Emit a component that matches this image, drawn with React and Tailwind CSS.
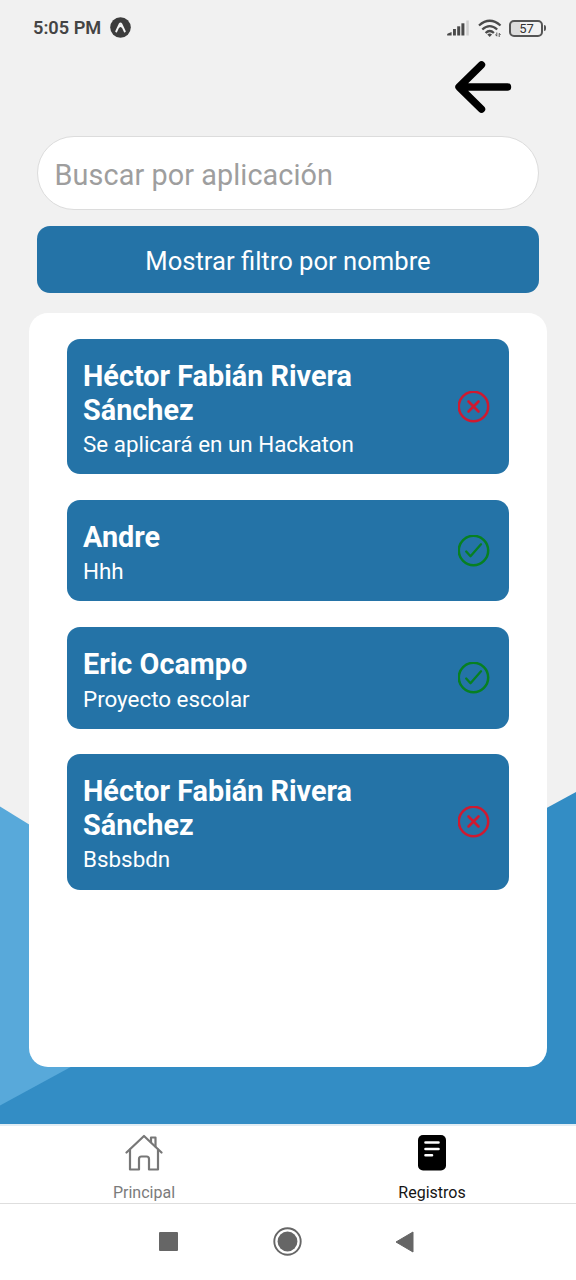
import React from "react";

const records = [
  { name: "Héctor Fabián Rivera Sánchez", detail: "Se aplicará en un Hackaton", ok: false },
  { name: "Andre", detail: "Hhh", ok: true },
  { name: "Eric Ocampo", detail: "Proyecto escolar", ok: true },
  { name: "Héctor Fabián Rivera Sánchez", detail: "Bsbsbdn", ok: false },
];

function Backdrop() {
  return (
    <svg className="absolute inset-0 -z-10 h-full w-full" viewBox="0 0 576 1124" preserveAspectRatio="none">
      <rect width="576" height="1124" fill="#f1f1f1" />
      <path d="M0 806.500 L260 967 L0 1110Z" fill="#58a9da" />
      <path d="M576 792 V1124 H0 V1105.500Z" fill="#338dc5" />
    </svg>
  );
}

function StatusBar() {
  return (
    <div className="flex h-14 items-center justify-between pl-[33px] pr-[30px] text-[#444]">
      <div className="flex items-center gap-[9px]">
        <span className="text-[18.200px] font-semibold leading-none">5:05 PM</span>
        <svg className="-mt-px h-[21px] w-[21px]" viewBox="0 0 21 21">
          <circle cx="10.500" cy="10.500" r="10.300" fill="#3c3c3c" />
          <path d="M6.200 14.500 L9.700 7 Q10.500 5.800 11.300 7 L14.800 14.500 M8.600 10 Q10.500 8 12.400 10" fill="none" stroke="#f4f4f4" strokeWidth="1.900" strokeLinecap="round" />
        </svg>
      </div>
      <div className="flex items-center">
        <svg className="mr-[9px] h-4 w-[22px]" viewBox="0 0 22 16" fill="#4a4a4a">
          <path d="M0.300 15.500 Q-0.500 14 1.500 13.300 L4.600 12 V15.500Z" />
          <rect x="6" y="9" width="2.900" height="6.500" />
          <rect x="10.200" y="6.300" width="3" height="9.200" />
          <rect x="14.400" y="3.300" width="3" height="12.200" />
          <rect x="19.300" y="0.500" width="2.500" height="15" fill="#d0d0d0" />
        </svg>
        <svg className="mr-[7px] h-[19px] w-6" viewBox="0 0 24 19" fill="none" stroke="#4a4a4a" strokeWidth="2.300">
          <path d="M1 6.500 Q11.700 -3 22.500 6.500" />
          <path d="M4.300 10.500 Q11.700 3.700 19.200 10.500" />
          <path d="M7.600 14 Q11.700 10 15.900 14" />
          <path d="M9.300 15.500 Q11.700 13.700 14 15.500 L11.700 18Z" fill="#4a4a4a" stroke="none" />
          <path d="M18.800 13.500 V17 M17.500 15.500 L18.800 17.300 M21.200 18 V14.500 M21.200 14.200 L22.500 16" strokeWidth="0.900" />
        </svg>
        <div className="flex h-[17px] w-[34px] items-center justify-center rounded-[5px] border-2 border-[#555] bg-linear-to-r from-[#dcdcdc] from-30% to-transparent to-30%">
          <span className="pl-px text-[13px] leading-none text-[#333]">57</span>
        </div>
        <div className="ml-px h-[6px] w-[2px] rounded-r bg-[#555]" />
      </div>
    </div>
  );
}

function StatusIcon({ ok }) {
  return (
    <svg className="-mt-[4px] h-8 w-8 shrink-0" viewBox="0 0 32 32" fill="none" strokeLinecap="round" strokeLinejoin="round" stroke={ok ? "#078022" : "#cf1a30"}>
      <circle cx="15.500" cy="15.500" r="14.700" strokeWidth="2.500" />
      {ok ? (
        <path d="M8.200 16.500 L12.500 21.200 L23 9.300" strokeWidth="2.300" />
      ) : (
        <path d="M10.500 10.500 L20.500 20.500 M20.500 10.500 L10.500 20.500" strokeWidth="2.600" />
      )}
    </svg>
  );
}

function RecordCard({ name, detail, ok }) {
  return (
    <li className="flex items-center justify-between rounded-[13px] bg-[#2473a7] pb-[16.800px] pl-4 pr-[19px] pt-[20.800px] text-white">
      <div className="w-[300px]">
        <h2 className="text-[28.800px] font-bold leading-[33.700px]">{name}</h2>
        <p className="mt-1 whitespace-nowrap text-[22.400px] leading-[26.300px]">{detail}</p>
      </div>
      <StatusIcon ok={ok} />
    </li>
  );
}

function TabBar() {
  return (
    <nav className="grid h-20 grid-cols-2 border-b border-t-2 border-b-[#dedede] border-t-[#e2edf4] bg-white text-center text-[16px] leading-[19px]">
      <div className="flex flex-col items-center pt-[8px] text-[#7b7b7b]">
        <svg className="mb-[11px] h-[38px] w-[38px]" viewBox="0 0 38 38" fill="none" stroke="#777" strokeWidth="2.200" strokeLinejoin="round" strokeLinecap="round">
          <path d="M1.500 18.500 L19 2 L36.500 18.500" />
          <path d="M5 15.500 V35.500 H14 V25 Q14 22.500 16.500 22.500 H21.500 Q24 22.500 24 25 V35.500 H33 V15.500" />
          <path d="M26 8 V3.500 H30.500 V12.500" />
        </svg>
        <span>Principal</span>
      </div>
      <div className="flex flex-col items-center pt-[8px] text-[#151515]">
        <svg className="mb-[11px] h-[38px] w-[38px]" viewBox="0 0 38 38">
          <rect x="5" y="1" width="28" height="35.500" rx="5" fill="#000" />
          <path d="M12.500 8.500 H25.500 M12.500 15 H25.500 M12.500 21.300 H19" stroke="#fff" strokeWidth="2.600" strokeLinecap="round" />
        </svg>
        <span>Registros</span>
      </div>
    </nav>
  );
}

function SystemNav() {
  return (
    <div className="flex h-[76px] items-center bg-white pb-px pl-[159px]">
      <svg className="h-[19px] w-[19px]" viewBox="0 0 19 19">
        <rect width="19" height="19" rx="1" fill="#666" />
      </svg>
      <svg className="ml-[95px] h-[29px] w-[29px]" viewBox="0 0 29 29">
        <circle cx="14.500" cy="14.500" r="13.200" fill="none" stroke="#666" strokeWidth="1.900" />
        <circle cx="14.500" cy="14.500" r="9.900" fill="#666" />
      </svg>
      <svg className="ml-[93px] h-[22px] w-[19px]" viewBox="0 0 19 22">
        <path d="M1 11 L18 1 V21Z" fill="#666" stroke="#666" strokeLinejoin="round" />
      </svg>
    </div>
  );
}

export default function App() {
  return (
    <div className="flex h-[1280px] w-[576px] flex-col overflow-hidden bg-white font-['Roboto',sans-serif]">
      <main className="relative isolate flex h-[1124px] flex-col">
        <Backdrop />
        <StatusBar />
        <div className="flex h-20 justify-end pr-[64px] pt-[4px]">
          <svg className="h-[54px] w-[58px]" viewBox="0 0 58 54" fill="none" stroke="#000" strokeWidth="7.400" strokeLinecap="round" strokeLinejoin="round">
            <path d="M53.500 27 H6 M27.500 4.800 L5 27 L27.500 49.200" />
          </svg>
        </div>
        <div className="mx-[37px] flex h-[74px] items-center rounded-full border-[1.600px] border-[#dcdcdc] bg-white pl-[16.600px] pt-[5px] text-[28.800px] tracking-[0.080px] text-[#9e9e9e]">
          Buscar por aplicación
        </div>
        <button className="mx-[37px] mt-4 flex h-[67px] items-center justify-center rounded-[13px] bg-[#2473a7] pt-[3px] text-[25.600px] text-white">
          Mostrar filtro por nombre
        </button>
        <ul className="mx-[29px] mt-5 flex h-[754px] flex-col gap-[25.600px] rounded-[19px] bg-white px-[38px] pt-[26px]">
          {records.map((r, i) => (
            <RecordCard key={i} {...r} />
          ))}
        </ul>
      </main>
      <TabBar />
      <SystemNav />
    </div>
  );
}
